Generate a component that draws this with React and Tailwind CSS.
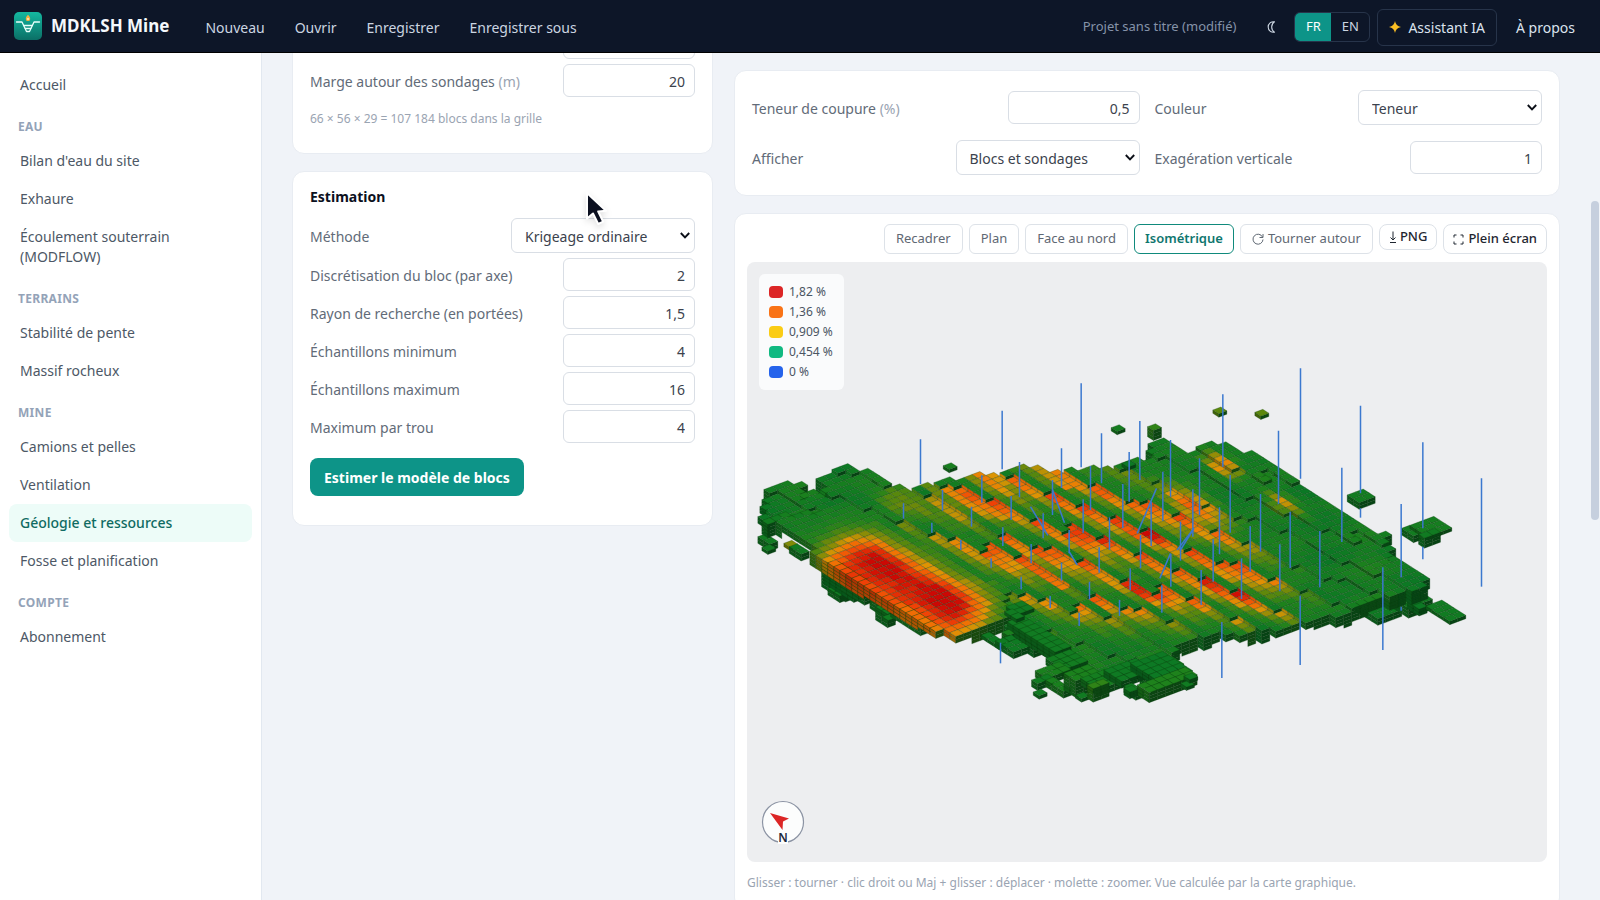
import React from "react";

/* ---------- Block model drawing ---------- */

const AX = [18, 11.5];
const BX = [24, -9];
const LIFT = 10;

const OUTLINE = [
  [52, 510], [60, 480], [78, 430], [108, 400], [150, 392], [185, 402], [185, 392], [320, 350], [340, 360], [400, 365], [430, 385],
  [450, 405], [500, 410], [560, 402], [620, 390], [720, 373], [785, 360], [850, 350], [960, 352], [1040, 352],
  [1090, 355], [1150, 340], [1215, 322], [1220, 295], [1262, 268], [1322, 300], [1410, 278], [1480, 280],
  [1650, 380], [1700, 415], [1800, 485], [1945, 558], [1968, 620], [2000, 650], [2055, 690], [2040, 722],
  [1960, 738], [1820, 785], [1720, 812], [1600, 838], [1500, 850], [1400, 855], [1310, 880], [1290, 925], [1330, 955],
  [1240, 985], [1150, 960], [1110, 985], [1040, 965], [990, 925], [900, 880], [800, 850], [780, 820],
  [640, 862], [600, 842], [360, 694], [230, 609], [200, 575], [105, 528], [100, 515],
];
const LOBE = [[50, 520], [95, 500], [230, 480], [330, 450], [410, 520], [520, 560], [600, 610], [690, 680], [810, 700], [800, 800], [640, 880], [600, 860], [360, 720], [200, 620]];

function inside(poly, x, y) {
  let hit = false;
  for (let i = 0, j = poly.length - 1; i < poly.length; j = i++) {
    const [xi, yi] = poly[i];
    const [xj, yj] = poly[j];
    if (yi > y !== yj > y && x < ((xj - xi) * (y - yi)) / (yj - yi) + xi) hit = !hit;
  }
  return hit;
}

function hash(i, j) {
  const s = Math.sin(i * 127.1 + j * 311.7) * 43758.5453;
  return s - Math.floor(s);
}

const RAMP = [
  [0, [8, 118, 38]], [0.25, [30, 130, 28]], [0.42, [92, 136, 12]], [0.52, [140, 140, 6]], [0.6, [222, 148, 4]],
  [0.72, [240, 116, 4]], [0.84, [240, 66, 6]], [1, [204, 8, 4]],
];
function tint(v, k) {
  const t = Math.max(0, Math.min(1, v));
  let n = 1;
  while (n < RAMP.length - 1 && RAMP[n][0] < t) n++;
  const [p, c] = RAMP[n - 1];
  const [q, d] = RAMP[n];
  const f = (t - p) / (q - p);
  return "rgb(" + c.map((m, x) => Math.round((m + (d[x] - m) * f) * k)).join(",") + ")";
}

const blob = (x, y, cx, cy, rl, rw) => {
  const dx = x - cx;
  const dy = y - cy;
  const u = (dx * 0.86 + dy * 0.51) / rl;
  const w = (-dx * 0.51 + dy * 0.86) / rw;
  return Math.exp(-(u * u + w * w));
};

/* distance-based falloff around the segment a-b, full strength on the segment */
function ridgeLine(x, y, ax, ay, bx, by, r) {
  const lx = bx - ax;
  const ly = by - ay;
  const t = Math.max(0, Math.min(1, ((x - ax) * lx + (y - ay) * ly) / (lx * lx + ly * ly)));
  const dx = (x - ax - lx * t) * 0.8;
  const dy = (y - ay - ly * t) * 1.15;
  return Math.exp(-Math.pow(Math.hypot(dx, dy) / r, 2.4));
}

function grade(x, y, fr, lobe) {
  const n = (hash(Math.round(x / 19), Math.round(y / 13)) - 0.5) * 0.06;
  if (lobe) {
    const g = 0.78 * ridgeLine(x, y, 370, 645, 620, 775, 118);
    const core = Math.max(blob(x, y, 440, 635, 90, 36), blob(x, y, 605, 735, 80, 40)) * 0.16;
    return 0.14 + g + core + n;
  }
  const field = Math.min(
    1,
    blob(x, y, 830, 600, 360, 170) * 1.15 + blob(x, y, 1130, 560, 460, 190) * 1.1 + blob(x, y, 1450, 660, 290, 110) * 0.9 + blob(x, y, 490, 490, 90, 30) * 0.8
  );
  const flat = Math.max(blob(x, y, 1445, 345, 75, 32) * 0.72, blob(x, y, 1360, 470, 150, 46) * 0.72, blob(x, y, 1630, 460, 80, 26) * 0.56);
  const hot = Math.max(
    blob(x, y, 1440, 700, 100, 28), blob(x, y, 1050, 555, 60, 24), blob(x, y, 990, 425, 50, 20), blob(x, y, 1200, 740, 60, 22),
    blob(x, y, 950, 710, 80, 26), blob(x, y, 1220, 560, 70, 20), blob(x, y, 760, 490, 90, 20) * 0.7
  );
  const ridge = field * (0.08 + 0.72 * Math.pow(fr, 1.05)) + (fr > 0.45 ? hot * 0.24 : 0);
  const drift = 0.1 * (1 + Math.sin(x / 61 + y / 37) * Math.cos(x / 97 - y / 29));
  return Math.max(flat, ridge, drift) + n + 0.03;
}

function buildModel() {
  const cells = new Map();
  const key = (i, j) => i + "," + j;
  for (let i = -35; i < 85; i++) {
    for (let j = -25; j < 95; j++) {
      const gx = 100 + AX[0] * i + BX[0] * j + 21;
      const gy = 535 + AX[1] * i + BX[1] * j + 1;
      let z = 0;
      let fr = 0;
      const lobe = inside(LOBE, gx, gy);
      if (!lobe) {
        const lane = Math.floor(j / 2);
        const t = 0.27 * (j - 8) - 0.066 * i + hash(lane, 7) * 0.6 + 0.3;
        z = Math.floor(t);
        fr = t - z;
      }
      const x = gx;
      const y = gy - LIFT * z;
      if (!inside(OUTLINE, x, y)) continue;
      if (x > 195 && x < 250 && y > 395 && y < 420) continue;
      cells.set(key(i, j), { i, j, z, v: grade(x, y, fr, lobe) });
    }
  }
  const out = [];
  const order = [...cells.values()].sort((p, q) => p.i - q.i || q.j - p.j);
  for (const c of order) {
    const left = cells.get(key(c.i, c.j - 1));
    const front = cells.get(key(c.i + 1, c.j));
    const px = 100 + AX[0] * c.i + BX[0] * c.j;
    const py = 535 + AX[1] * c.i + BX[1] * c.j - LIFT * c.z;
    const skirt = 2 + Math.floor(hash(Math.floor(c.i / 3), Math.floor(c.j / 3)) * 3);
    const dl = left ? Math.min(6, c.z - left.z) : skirt;
    const df = front ? Math.min(6, c.z - front.z) : skirt;
    pushBlock(out, px, py, 1, 1, dl, df, c.v, left ? Math.max(c.v, left.v) : c.v);
  }
  return out;
}

function pushBlock(out, px, py, na, nb, dl, df, v, wall = v) {
  const shade = wall > v ? 0.92 : 0.72;
  for (let k = 0; k < dl; k++) {
    for (let n = 0; n < na; n++) {
      const x = px + AX[0] * n;
      const y = py + AX[1] * n + k * LIFT;
      out.push([`M${x} ${y}l${AX[0]} ${AX[1]}v${LIFT}l${-AX[0]} ${-AX[1]}z`, tint(wall - 0.02 * k, shade)]);
    }
  }
  const fx = px + AX[0] * na;
  const fy = py + AX[1] * na;
  for (let k = 0; k < df; k++) {
    for (let n = 0; n < nb; n++) {
      const x = fx + BX[0] * n;
      const y = fy + BX[1] * n + k * LIFT;
      out.push([`M${x} ${y}l${BX[0]} ${BX[1]}v${LIFT}l${-BX[0]} ${-BX[1]}z`, tint(v * 0.5, 0.56)]);
    }
  }
  for (let n = 0; n < na; n++) {
    for (let m = nb - 1; m >= 0; m--) {
      const x = px + AX[0] * n + BX[0] * m;
      const y = py + AX[1] * n + BX[1] * m;
      out.push([`M${x} ${y}l${AX[0]} ${AX[1]}l${BX[0]} ${BX[1]}l${-AX[0]} ${-AX[1]}z`, tint(v, 1)]);
    }
  }
}

/* left corner x, y, blocks along each axis, height, grade */
const UNDER = [
  [52, 560, 2, 1, 2, 0.1], [64, 592, 1, 1, 1, 0.1], [130, 580, 1, 1, 1, 0.5], [146, 590, 2, 1, 2, 0.1],
  [243, 640, 4, 1, 7, 0.1], [262, 715, 2, 1, 2, 0.1], [250, 650, 5, 2, 5, 0.1], [300, 690, 4, 2, 3, 0.1],
  [388, 745, 3, 2, 3, 0.12], [405, 770, 2, 1, 4, 0.1], [425, 800, 1, 1, 1, 0.1], [450, 770, 5, 2, 3, 0.15],
  [1840, 760, 4, 3, 2, 0.08], [1950, 740, 3, 3, 3, 0.1], [2000, 755, 2, 1, 2, 0.05],
];
const OVER = [
  [722, 855, 3, 1, 1, 0.08], [765, 872, 3, 2, 2, 0.08], [820, 840, 8, 1, 2, 0.1], [800, 815, 8, 2, 2, 0.1],
  [916, 925, 3, 3, 2, 0.12], [884, 962, 2, 3, 2, 0.2], [873, 990, 1, 2, 2, 0.1], [915, 990, 3, 1, 2, 0.2], [878, 1026, 1, 1, 1, 0.1],
  [970, 970, 2, 3, 5, 0.22], [1020, 985, 3, 3, 2, 0.15], [1005, 1035, 1, 1, 1, 0.1], [1040, 1005, 1, 2, 4, 0.3],
  [1090, 960, 3, 4, 2, 0.08], [1150, 1008, 2, 1, 2, 0.1], [1170, 940, 5, 4, 2, 0.06],
  [1190, 1005, 2, 6, 3, 0.25], [1150, 1015, 1, 1, 2, 0.1], [1320, 1000, 1, 1, 1, 0.1], [1330, 978, 1, 1, 1, 0.1],
  [797, 770, 2, 2, 1, 0.1], [792, 785, 2, 1, 1, 0.1],
  [1112, 233, 1, 1, 1, 0.15], [608, 347, 1, 1, 1, 0.18], [1144, 340, 1, 1, 1, 0.06], [1417, 180, 1, 1, 1, 0.42], [1543, 187, 1, 1, 1, 0.42],
  [1221, 230, 1, 1, 3, 0.3], [1820, 435, 2, 2, 2, 0.12],
  [1983, 535, 2, 1, 2, 0.12], [2008, 526, 3, 3, 1, 0.16], [2034, 553, 1, 2, 3, 0.1],
  [2056, 768, 4, 2, 1, 0.1],
];

const HOLES = [
  [540, 268, 402], [785, 182, 358], [1022, 100, 352], [837, 336, 442], [963, 295, 414], [1083, 250, 400], [1050, 348, 480],
  [1166, 306, 455], [724, 376, 458], [606, 420, 482], [489, 460, 506], [693, 470, 530], [812, 438, 510], [574, 518, 548],
  [661, 570, 600], [752, 625, 653], [787, 532, 588], [872, 582, 640], [936, 390, 495], [908, 490, 565], [1028, 448, 548],
  [1107, 502, 600], [1147, 402, 535], [986, 540, 610], [1076, 592, 668], [1047, 695, 748], [963, 638, 692], [842, 680, 718],
  [929, 738, 774], [1016, 788, 828], [1137, 750, 798], [1169, 655, 720], [780, 878, 940], [1198, 213, 390], [1290, 270, 440],
  [1267, 365, 512], [1377, 325, 495], [1447, 133, 350], [1469, 375, 548], [1614, 242, 462], [1680, 55, 386], [1860, 167, 430],
  [1860, 475, 503], [2047, 277, 535], [2047, 590, 628], [1982, 462, 682], [1982, 770, 782], [2223, 385, 710], [1804, 353, 576],
  [1560, 432, 605], [1649, 485, 654], [1738, 543, 712], [1618, 583, 724], [1529, 528, 665], [1437, 472, 612], [1357, 418, 560],
  [1320, 515, 632], [1232, 455, 588], [1418, 568, 695], [1503, 625, 747], [1382, 660, 765], [1291, 612, 710], [1200, 555, 655],
  [1264, 706, 788], [1927, 652, 900], [1679, 737, 945], [1444, 816, 984],
];
const INCLINED = [
  [936, 420, 972, 518], [870, 470, 922, 556], [986, 605, 1010, 645], [1248, 415, 1190, 550], [1360, 535, 1310, 600],
  [1360, 535, 1320, 600], [1290, 610, 1258, 685],
];

function boxes(list) {
  const out = [];
  list.forEach(([x, y, na, nb, h, v]) => pushBlock(out, x, y, na, nb, h, h, v));
  return out;
}
const FACES = [...boxes(UNDER), ...buildModel(), ...boxes(OVER)];

function BlockModel() {
  return (
    <svg viewBox="21 -264 2397 1800" className="h-full w-full" role="img">
      <g stroke="#0b3d10" strokeOpacity="0.5" strokeWidth="1.6" strokeLinejoin="round">
        {FACES.map(([d, fill], n) => (
          <path key={n} d={d} fill={fill} />
        ))}
      </g>
      <g stroke="#3b78cf" strokeWidth="4.5">
        {HOLES.map(([x, a, b], n) => (
          <path key={n} d={`M${x} ${a}V${b}`} />
        ))}
        {INCLINED.map(([a, b, c, d], n) => (
          <path key={n} d={`M${a} ${b}L${c} ${d}`} />
        ))}
      </g>
    </svg>
  );
}

/* ---------- Page ---------- */

const NAV = [
  { items: ["Accueil"] },
  { title: "EAU", items: ["Bilan d'eau du site", "Exhaure", "Écoulement souterrain (MODFLOW)"] },
  { title: "TERRAINS", items: ["Stabilité de pente", "Massif rocheux"] },
  { title: "MINE", items: ["Camions et pelles", "Ventilation", "Géologie et ressources", "Fosse et planification"] },
  { title: "COMPTE", items: ["Abonnement"] },
];

const LEGEND = [
  ["bg-[#dc2626]", "1,82 %"],
  ["bg-[#f97316]", "1,36 %"],
  ["bg-[#facc15]", "0,909 %"],
  ["bg-[#10b981]", "0,454 %"],
  ["bg-[#2563eb]", "0 %"],
];

function Logo() {
  return (
    <svg viewBox="0 0 28 28" className="h-7 w-7 shrink-0" aria-hidden="true">
      <defs>
        <linearGradient id="logo" x1="0" y1="0" x2="0" y2="1">
          <stop offset="0" stopColor="#14b8a0" />
          <stop offset="1" stopColor="#0b6f66" />
        </linearGradient>
      </defs>
      <rect width="28" height="28" rx="5" fill="url(#logo)" />
      <g fill="none" stroke="#e8fffb" strokeWidth="1.3" strokeLinejoin="round" strokeLinecap="round">
        <path d="M2.500 10H8l4.500 9.500h3L20 10h5.500" />
        <path d="M9.800 13.500h8.400M11.300 16.500h5.400" />
      </g>
      <path d="M14 2.800c1.700 1.900 2.200 3 2.200 4.100a2.200 2.200 0 0 1-4.400 0C11.800 5.800 12.300 4.700 14 2.800z" fill="#f5b041" />
      <circle cx="14" cy="7" r="1.100" fill="#fde9c0" />
    </svg>
  );
}

function Header() {
  return (
    <header className="flex h-[53px] shrink-0 items-center border-b border-black bg-[#0d1628] pl-[14px] pr-[25px] text-[#cbd5e1]">
      <Logo />
      <span className="ml-[9px] text-[17px] font-bold text-[#f5f8fc]">MDKLSH Mine</span>
      <nav className="ml-9 flex gap-[30px] pt-[3px]">
        {["Nouveau", "Ouvrir", "Enregistrer", "Enregistrer sous"].map((t) => (
          <button key={t} type="button">{t}</button>
        ))}
      </nav>
      <div className="ml-auto flex items-center pt-0.5">
        <span className="text-[13px] text-[#8593a9]">Projet sans titre (modifié)</span>
        <button type="button" aria-label="Thème" className="ml-[30px]">
          <svg viewBox="0 0 12 12" className="h-3 w-3" aria-hidden="true">
            <path d="M8.500.8A5.300 5.300 0 1 0 8.500 11.200 6.200 6.200 0 0 1 8.500.8z" fill="none" stroke="#cbd5e1" strokeWidth="1.100" strokeLinejoin="round" />
          </svg>
        </button>
        <div className="ml-4 flex h-[30px] overflow-hidden rounded-md border border-[#27344a] text-[13px]">
          <button type="button" className="w-9 bg-[#0d9488] text-white">FR</button>
          <button type="button" className="w-[38px]">EN</button>
        </div>
        <button type="button" className="ml-[7px] flex h-[37px] items-center gap-[7px] rounded-md border border-[#27344a] px-[11px] text-[#dbe3ee]">
          <svg viewBox="0 0 12 12" className="h-3 w-3" aria-hidden="true">
            <path d="M6 0Q6.800 5.200 12 6 6.800 6.800 6 12 5.200 6.800 0 6 5.200 5.200 6 0z" fill="#fbbf24" />
          </svg>
          Assistant IA
        </button>
        <button type="button" className="ml-[19px] text-[#dbe3ee]">À propos</button>
      </div>
    </header>
  );
}

function Sidebar() {
  return (
    <nav className="w-[262px] shrink-0 border-r border-[#e2e8f0] bg-white px-[9px] pt-[13px]">
      {NAV.map((g) => (
        <div key={g.items[0]}>
          {g.title && <h2 className="px-[9px] pb-[7px] pt-[15px] text-xs font-bold leading-4 tracking-wide text-[#94a3b8]">{g.title}</h2>}
          {g.items.map((t) => (
            <a
              key={t}
              href="#"
              className={
                t === "Géologie et ressources"
                  ? "block rounded-lg bg-[#edfcf8] px-[11px] py-[9px] font-medium leading-5 text-[#0f6b62]"
                  : "block px-[11px] py-[9px] leading-5 text-[#4d5866]"
              }
            >
              {t}
            </a>
          ))}
        </div>
      ))}
    </nav>
  );
}

function Label({ id, unit, children }) {
  return (
    <label htmlFor={id} className="pt-0.5 text-[#626b78]">
      {children}
      {unit && <span className="text-[#9aa4b2]"> {unit}</span>}
    </label>
  );
}

function NumberRow({ id, label, unit, value }) {
  return (
    <div className="flex items-center justify-between">
      <Label id={id} unit={unit}>{label}</Label>
      <input id={id} inputMode="decimal" defaultValue={value} className="h-[33px] w-[132px] rounded-md border border-[#d9dee5] bg-white px-[9px] pt-0.5 text-right text-[#3b424d]" />
    </div>
  );
}

function SelectRow({ id, label, value }) {
  return (
    <div className="flex items-center justify-between">
      <Label id={id}>{label}</Label>
      <div className="relative w-[184px]">
        <select id={id} className="h-[35px] w-full appearance-none rounded-md border border-[#d9dee5] bg-white pl-[13px] pr-6 pt-0.5 text-[#3b424d]">
          <option>{value}</option>
        </select>
        <svg viewBox="0 0 10 7" className="pointer-events-none absolute right-[5px] top-[14px] h-[7px] w-[10px]" fill="none" stroke="#0b0f17" strokeWidth="1.900" aria-hidden="true">
          <path d="M.8 1L5 5.300 9.200 1" />
        </svg>
      </div>
    </div>
  );
}

function ViewButton({ children, active }) {
  return (
    <button
      type="button"
      className={
        active
          ? "flex h-[30px] items-center gap-1 rounded-md border border-[#0f8a7c] bg-white px-[10px] font-semibold text-[#0f766e]"
          : "flex h-[30px] items-center gap-1 rounded-md border border-[#dde2e8] bg-white px-[11px] text-[#5f6873]"
      }
    >
      {children}
    </button>
  );
}

function Compass() {
  return (
    <svg viewBox="0 0 44 46" className="absolute bottom-4 left-[14px] h-[46px] w-11" aria-hidden="true">
      <circle cx="22" cy="22" r="20.500" fill="#fcfdfd" stroke="#8b93a3" strokeWidth="1.200" />
      <path d="M9 13L28 18.500 22 21.500 21.500 30z" fill="#dc2626" />
      <rect x="17" y="31" width="10" height="13" fill="#fcfdfd" />
      <text x="22" y="42" textAnchor="middle" fontSize="12" fontWeight="600" fill="#1e293b">N</text>
    </svg>
  );
}

function Pointer() {
  return (
    <svg viewBox="0 0 30 40" className="absolute left-[290px] top-[18px] h-10 w-[30px] drop-shadow-md" aria-hidden="true">
      <path d="M4 3v25.500l6-5 5.200 10.500 5-2.300-5-10.200 7.800-.700z" fill="#0b1020" stroke="#fff" strokeWidth="2" strokeLinejoin="round" />
    </svg>
  );
}

export default function App() {
  return (
    <div className="flex h-screen flex-col bg-[#f0f3f8] font-['Noto_Sans','Open_Sans',sans-serif] text-[14px]">
      <Header />
      <div className="flex min-h-0 flex-1">
        <Sidebar />
        <main className="flex min-w-0 flex-1 items-start gap-[21px] overflow-hidden pl-[30px] pr-[31px]">
          <div className="-mt-9 w-[421px] shrink-0">
            <section className="flex flex-col gap-[5px] rounded-xl border border-[#e8ecf2] bg-white px-[17px] pb-6 pt-2">
              <div className="h-[33px] w-[132px] self-end rounded-md border border-[#d9dee5]" />
              <NumberRow id="marge" label="Marge autour des sondages" unit="(m)" value="20" />
              <p className="mt-[7px] text-xs leading-5 text-[#9aa4b2]">66 × 56 × 29 = 107 184 blocs dans la grille</p>
            </section>
            <section className="relative mt-[17px] flex flex-col gap-[5px] rounded-xl border border-[#e8ecf2] bg-white px-[17px] pb-[29px] pt-[15px]">
              <h2 className="mb-[6px] text-[14px] font-bold leading-5 text-[#0b1020]">Estimation</h2>
              <SelectRow id="methode" label="Méthode" value="Krigeage ordinaire" />
              <NumberRow id="discretisation" label="Discrétisation du bloc (par axe)" value="2" />
              <NumberRow id="rayon" label="Rayon de recherche (en portées)" value="1,5" />
              <NumberRow id="min" label="Échantillons minimum" value="4" />
              <NumberRow id="max" label="Échantillons maximum" value="16" />
              <NumberRow id="trou" label="Maximum par trou" value="4" />
              <button type="button" className="mt-[10px] h-[38px] self-start rounded-lg bg-[#0d9488] px-[14px] font-bold text-white">
                Estimer le modèle de blocs
              </button>
              <Pointer />
            </section>
          </div>

          <div className="mt-[17px] min-w-0 flex-1">
            <section className="grid grid-cols-2 gap-x-[15px] gap-y-[15px] rounded-xl border border-[#e8ecf2] bg-white px-[17px] pb-5 pt-[19px]">
              <NumberRow id="coupure" label="Teneur de coupure" unit="(%)" value="0,5" />
              <SelectRow id="couleur" label="Couleur" value="Teneur" />
              <SelectRow id="afficher" label="Afficher" value="Blocs et sondages" />
              <NumberRow id="exageration" label="Exagération verticale" value="1" />
            </section>

            <section className="mt-[17px] rounded-xl border border-[#e8ecf2] bg-white px-3 pb-4 pt-[10px]">
              <div className="flex items-start justify-end gap-[6px] text-[13px]">
                <ViewButton>Recadrer</ViewButton>
                <ViewButton>Plan</ViewButton>
                <ViewButton>Face au nord</ViewButton>
                <ViewButton active>Isométrique</ViewButton>
                <ViewButton>
                  <svg viewBox="0 0 12 12" className="h-3 w-3" fill="none" stroke="currentColor" aria-hidden="true">
                    <path d="M10.500 4A5 5 0 1 0 11 6.500M11 1v3.500H7.500" />
                  </svg>
                  Tourner autour
                </ViewButton>
                <button type="button" className="flex h-[26px] items-center gap-[3px] rounded-lg border border-[#dde2e8] bg-white px-[9px] font-medium text-[#1f2630]">
                  <svg viewBox="0 0 8 12" className="h-3 w-2" fill="none" stroke="currentColor" aria-hidden="true">
                    <path d="M4 .5V9M1.500 6.500L4 9l2.500-2.500M1 11.500h6" />
                  </svg>
                  PNG
                </button>
                <button type="button" className="flex h-[30px] items-center gap-1 rounded-lg border border-[#dde2e8] bg-white px-[9px] font-medium text-[#1f2630]">
                  <svg viewBox="0 0 11 11" className="h-[11px] w-[11px]" fill="none" stroke="currentColor" aria-hidden="true">
                    <path d="M1 3.500V1h2.500M7.500 1H10v2.500M10 7.500V10H7.500M3.500 10H1V7.500" />
                  </svg>
                  Plein écran
                </button>
              </div>
              <div className="relative mt-2 h-[600px] overflow-hidden rounded-lg bg-[#edeef0]">
                <BlockModel />
                <ul className="absolute left-3 top-3 flex w-[85px] flex-col rounded-md bg-[#fafbfc] px-[10px] py-2 text-xs text-[#4b5563]">
                  {LEGEND.map(([c, t]) => (
                    <li key={t} className="flex h-5 items-center gap-[6px] whitespace-nowrap">
                      <span className={`h-3 w-[14px] shrink-0 rounded-sm ${c}`} />
                      {t}
                    </li>
                  ))}
                </ul>
                <Compass />
              </div>
              <p className="mt-[11px] text-xs leading-5 text-[#9aa4b2]">
                Glisser : tourner · clic droit ou Maj + glisser : déplacer · molette : zoomer. Vue calculée par la carte graphique.
              </p>
            </section>
          </div>
        </main>
        <div className="w-[9px] shrink-0 pt-[148px]" aria-hidden="true">
          <div className="h-[319px] w-2 rounded-full bg-[#c6cfde]" />
        </div>
      </div>
    </div>
  );
}
